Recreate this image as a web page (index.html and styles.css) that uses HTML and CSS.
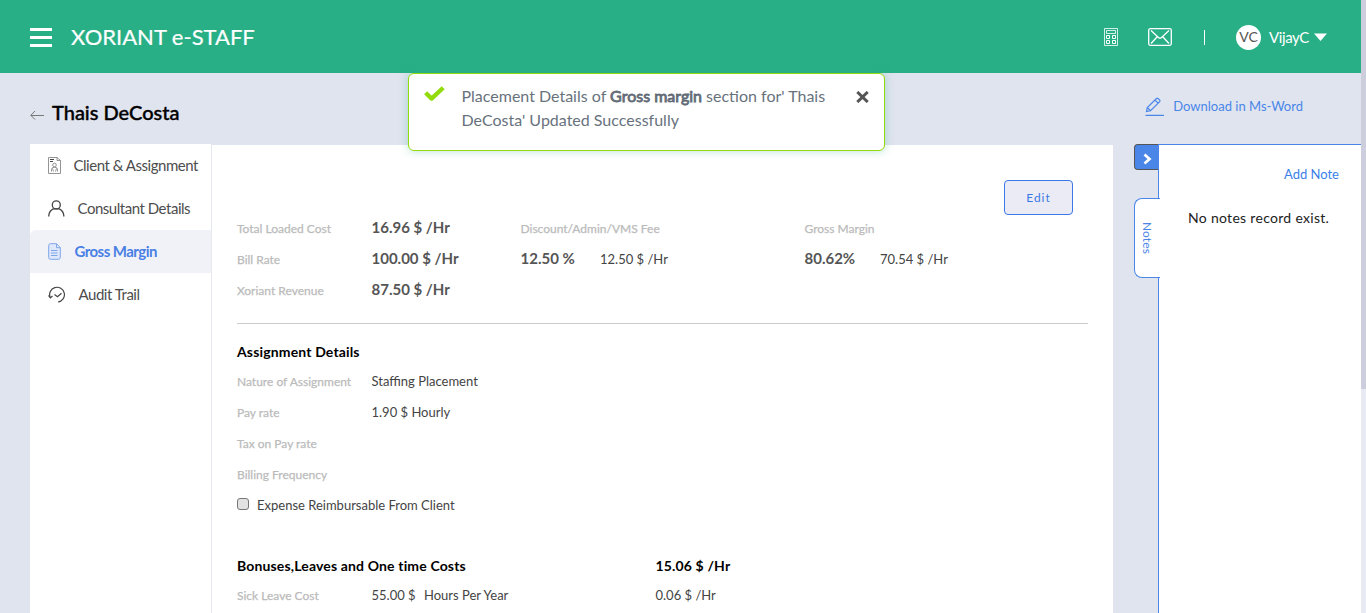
FILE: index.html
```html
<!DOCTYPE html>
<html lang="en">
<head>
<meta charset="utf-8">
<title>Xoriant e-STAFF</title>
<link rel="stylesheet" href="styles.css">
</head>
<body>
<div class="app">
  <div class="page">
    <header class="topbar">
      <div class="burger"><i></i><i></i><i></i></div>
      <div class="brand">XORIANT e-STAFF</div>
      <div class="tools">
        <svg class="calc" width="14" height="18" viewBox="0 0 14 18" fill="none" stroke="#fff"><path d="M.5.5h13v17H.5zM2.5 2.5h9v3h-9z" stroke-opacity=".8"/><path d="M2.5 7.500h3v3h-3zM8.500 7.500h3v3h-3zM2.500 12.500h3v3h-3zM8.500 12.500h3v3h-3z"/></svg>
        <svg class="mail" width="24" height="18" viewBox="0 0 24 18" fill="none" stroke="#fff" stroke-width="1.300"><rect x=".7" y=".7" width="22.600" height="16.600" rx="1.500"/><path d="M3 2.500l7.500 7q1.500 1.300 3 0l7.500-7M3 15.500l6.500-7M21 15.500l-6.500-7"/></svg>
        <span class="divider"></span>
        <span class="avatar">VC</span>
        <span class="user">VijayC</span>
        <svg class="caret" width="13" height="8" viewBox="0 0 13 8"><path d="M0 .5h13L6.500 8z" fill="#fff"/></svg>
      </div>
    </header>

    <div class="titlebar">
      <svg class="back" width="14" height="10" viewBox="0 0 14 10" fill="none" stroke="#777"><path d="M14 5.500H1M5 1L.8 5.300 5 9.500"/></svg>
      <h1>Thais DeCosta</h1>
      <a class="download">
        <svg width="20" height="20" viewBox="0 0 20 20" fill="none" stroke="#4a86e8" stroke-width="1.200"><path d="M1.500 14.500l.8-4L11.500 1.500q.8-.7 1.600 0l1.600 1.700q.6.700 0 1.400L5.500 13.700zM10 3l3.300 3.300M2.300 10.500l3.200 3.200M.5 18.400h18.500"/></svg>
        <span>Download in Ms-Word</span>
      </a>
    </div>

    <div class="columns">
      <nav class="side">
        <a class="item one"><svg width="13" height="17" viewBox="0 0 13 17" fill="none" stroke="#888" stroke-width=".9"><path d="M.5.5h8.500l3.500 3v13H.5zM9 .5v3h3.500M3.500 14.500v-2.200q0-2 3-2t3 2v2.200M4.500 11.500l1 3M8.500 11.500l-1 3"/><circle cx="6.500" cy="8" r="1.800"/><path d="M2 2.500h4M2 4.500h3" stroke="#333"/></svg><span>Client &amp; Assignment</span></a>
        <a class="item two"><svg width="17" height="17" viewBox="0 0 17 17" fill="none" stroke="#444" stroke-width="1.300"><circle cx="8.300" cy="4.900" r="4"/><path d="M.8 16.500v-1q.5-4.700 4.500-6.600h6q4 1.900 4.500 6.600v1"/></svg><span>Consultant Details</span></a>
        <a class="item three active"><svg width="13" height="17" viewBox="0 0 13 17" fill="#dfe8fb" stroke="#7da5ea"><path d="M2.500.7h6l3.800 4v9.600q0 2-2 2h-7.800q-1.800 0-1.800-2V2.700q0-2 1.800-2zM8.500.7v4h3.800M3 7.500h6.500M3 10h6.500M3 12.500h6.500"/></svg><span>Gross Margin</span></a>
        <a class="item four"><svg width="18" height="17" viewBox="0 0 18 17" fill="none" stroke="#444" stroke-width="1.200"><path d="M2.200 11.500A7.400 7.400 0 1 1 10 16M.5 9.500l1.800 2.400 2.200-1.900M6.500 8.500l3 2.300 4-3.600"/></svg><span>Audit Trail</span></a>
      </nav>

      <main class="content">
        <div class="actions"><button class="edit">Edit</button></div>
        <section class="summary">
          <div class="row"><span class="label">Total Loaded Cost</span><b class="big">16.96 $ /Hr</b><span class="label c3">Discount/Admin/VMS Fee</span><span class="label c4">Gross Margin</span></div>
          <div class="row"><span class="label">Bill Rate</span><b class="big wide">100.00 $ /Hr</b><span class="pair c3"><b class="big">12.50 %</b><span class="value">12.50 $ /Hr</span></span><span class="pair c4"><b class="big tight">80.62%</b><span class="value">70.54 $ /Hr</span></span></div>
          <div class="row"><span class="label">Xoriant Revenue</span><b class="big">87.50 $ /Hr</b></div>
        </section>
        <section class="details">
          <h2>Assignment Details</h2>
          <div class="row"><span class="label">Nature of Assignment</span><span class="value">Staffing Placement</span></div>
          <div class="row"><span class="label">Pay rate</span><span class="value">1.90 $ Hourly</span></div>
          <div class="row"><span class="label">Tax on Pay rate</span></div>
          <div class="row"><span class="label">Billing Frequency</span></div>
          <label class="check"><span class="box"></span><span>Expense Reimbursable From Client</span></label>
        </section>
        <section class="costs">
          <div class="costhead"><h2>Bonuses,Leaves and One time Costs</h2><h2>15.06 $ /Hr</h2></div>
          <div class="costrow"><span class="label">Sick Leave Cost</span><span class="value">55.00 $</span><span class="value">Hours Per Year</span><span class="value">0.06 $ /Hr</span></div>
        </section>
      </main>

      <aside class="notes">
        <div class="tabs">
          <div class="toggle"><svg width="9" height="12" viewBox="0 0 9 12" fill="none" stroke="#fff" stroke-width="2.700"><path d="M1.500 1.500L6.500 6l-5 4.500"/></svg></div>
          <div class="tab"><span>Notes</span></div>
        </div>
        <div class="panel"><a>Add Note</a><p>No notes record exist.</p></div>
      </aside>
    </div>
  </div>
  <div class="scroll"><div class="thumb"></div></div>

  <div class="toast">
    <svg class="ok" width="21" height="16" viewBox="0 0 21 16" fill="none" stroke="#93dc0b" stroke-width="4.300" stroke-linejoin="round"><path d="M1.600 6.800l6 5.800L19.200 1.800"/></svg>
    <p>Placement Details of <b>Gross margin</b> section for' Thais<br>DeCosta' Updated Successfully</p>
    <svg class="close" width="13" height="12" viewBox="0 0 13 12" fill="none" stroke="#555" stroke-width="3"><path d="M1.300 1l10.400 10M11.700 1L1.300 11"/></svg>
  </div>
</div>
</body>
</html>
```
FILE: styles.css
```css
* { box-sizing: border-box; }
body { margin: 0; font-family: Lato, "Liberation Sans", sans-serif; color: #444; overflow: hidden; }
h1, h2, p { margin: 0; }
svg { display: block; flex: none; }
.app { position: relative; display: flex; width: 1366px; height: 613px; overflow: hidden; background: #e0e4ef; }
.page { width: 1361px; height: 613px; display: flex; flex-direction: column; }
.scroll { width: 5px; background: #e8eaf3; }
.thumb { height: 389px; background: #cccede; }

.topbar { height: 73px; flex: none; background: #29af86; color: #fff; display: flex; align-items: center; padding: 0 34px 0 30px; }
.burger { width: 22px; display: grid; gap: 5px; padding-top: 2px; }
.burger i { height: 3px; background: #fff; }
.brand { margin-left: 19px; font-size: 22px; line-height: 30px; white-space: nowrap; -webkit-text-stroke: .2px #fff; }
.tools { margin-left: auto; display: flex; align-items: center; padding-top: 1px; }
.mail { margin-left: 30px; }
.divider { width: 1px; height: 15px; margin-left: 32px; background: #fff; }
.avatar { width: 25px; height: 25px; margin-left: 31px; border-radius: 50%; background: #fff; color: #555; font-size: 14px; line-height: 24px; text-align: center; }
.user { width: 40px; margin: -1px 0 0 8px; font-size: 15px; white-space: nowrap; letter-spacing: -.4px; }
.caret { margin-left: 5px; }

.titlebar { height: 71px; flex: none; display: flex; padding-left: 30px; }
.back { margin-top: 37px; }
h1 { margin: 27px 0 0 8px; font-size: 20px; line-height: 24px; font-weight: 500; color: #000; -webkit-text-stroke: .4px #000; }
.download { margin: 24px 58px 0 auto; display: flex; color: #4a86e8; font-size: 13px; line-height: 18px; gap: 8px; white-space: nowrap; }

.columns { display: flex; flex: 1; min-height: 0; }
.side { width: 182px; margin-left: 30px; background: #fff; border-right: 1px solid #e6e8ef; flex: none; }
.item { display: flex; align-items: center; gap: 12.500px; height: 43px; padding-left: 18px; font-size: 15px; letter-spacing: -.47px; color: #4d4d4d; white-space: nowrap; }
.item span { margin-top: -1px; }
.item.active { background: #f1f2f8; border-radius: 6px 0 0 0; color: #4a7fe5; font-weight: 700; letter-spacing: -.55px; gap: 13.500px; }

.content { width: 901px; margin-top: 1px; flex: none; background: #fff; padding: 35px 25px 0; overflow: hidden; }
.actions { display: flex; justify-content: flex-end; padding-right: 15px; }
.edit { width: 69px; height: 35px; padding: 0; border: 1px solid #3b78e7; border-radius: 4px; background: #eaebf4; color: #3b78e7; font: 12px/33px Lato, sans-serif; letter-spacing: 1px; }
.row { height: 31px; display: flex; align-items: center; white-space: nowrap; }
.row > :nth-child(2) { width: 149px; }
.label { width: 134.500px; font-size: 12px; line-height: 18px; color: #bbb; -webkit-text-stroke: .25px #bbb; white-space: nowrap; padding-top: 2px; }
.value { font-size: 13px; line-height: 18px; color: #444; white-space: nowrap; }
.big { font-size: 15px; line-height: 20px; font-weight: 700; color: #555; }
.c3 { width: 284px; }
.pair { display: flex; align-items: center; }
.pair .big { width: 79.500px; }
.pair.c4 .big { width: 75.500px; }
.summary { height: 113px; border-bottom: 1px solid #ccc; margin-top: -4px; width: 851px; }
.summary .label { padding-top: 4px; }
.summary .value { padding-top: 2px; }
h2 { font-size: 14px; line-height: 20px; font-weight: 700; letter-spacing: .15px; color: #000; white-space: nowrap; }
.details { padding-top: 18px; }
.details h2 { margin-bottom: 3px; }
.check { display: flex; align-items: center; height: 30px; gap: 8px; font-size: 13px; margin-top: 1px; }
.box { width: 12px; height: 12px; margin-top: -2px; border: 1px solid #777; border-radius: 3px; background: #e2e2e2; }
.costs { padding-top: 36px; }
.costhead, .costrow { display: grid; grid-template-columns: 418.500px auto; }
.costrow { grid-template-columns: 134.500px 52.500px 231.500px auto; height: 30px; align-items: center; padding-top: 8px; }

.notes { margin-left: 21px; width: 227px; display: flex; }
.tabs { width: 25px; flex: none; }
.toggle { width: 25px; height: 26px; border: 1px solid #555; border-right: 0; border-radius: 4px 0 0 4px; background: #4a86e8; display: flex; align-items: center; padding: 4px 0 0 8px; }
.tab { position: relative; width: 26px; height: 80px; margin-top: 28px; border: 1px solid #4a86e8; border-right: 0; border-radius: 8px 0 0 8px; background: #fff; display: flex; align-items: center; justify-content: center; color: #4a86e8; font-size: 12px; letter-spacing: .1px; }
.tab span { writing-mode: vertical-rl; }
.panel { width: 203px; background: #fff; border: 1px solid #4a86e8; border-width: 1px 0 0 1px; padding: 19px 22px 0 29px; margin-left: -1px; }
.panel a { display: block; text-align: right; font-size: 13px; line-height: 20px; color: #3b7fe7; }
.panel p { margin-top: 24px; font-size: 14px; line-height: 20px; letter-spacing: .3px; color: #222; white-space: nowrap; }

.toast { position: absolute; left: 408px; top: 73px; width: 477px; height: 78px; border: 1px solid #93dc0b; border-radius: 6px; background: #fff; display: flex; padding: 11px 15px; box-shadow: 0 0 10px rgba(40,175,134,.35); }
.ok { margin: 1px 0 0 0; }
.toast p { margin: -1px 0 0 16.500px; width: 390.500px; font-size: 16px; line-height: 24px; color: #68727d; white-space: nowrap; }
.toast b { font-weight: 400; -webkit-text-stroke: .8px #5f6975; }
.close { margin: 6px 0 0 4px; }
```
